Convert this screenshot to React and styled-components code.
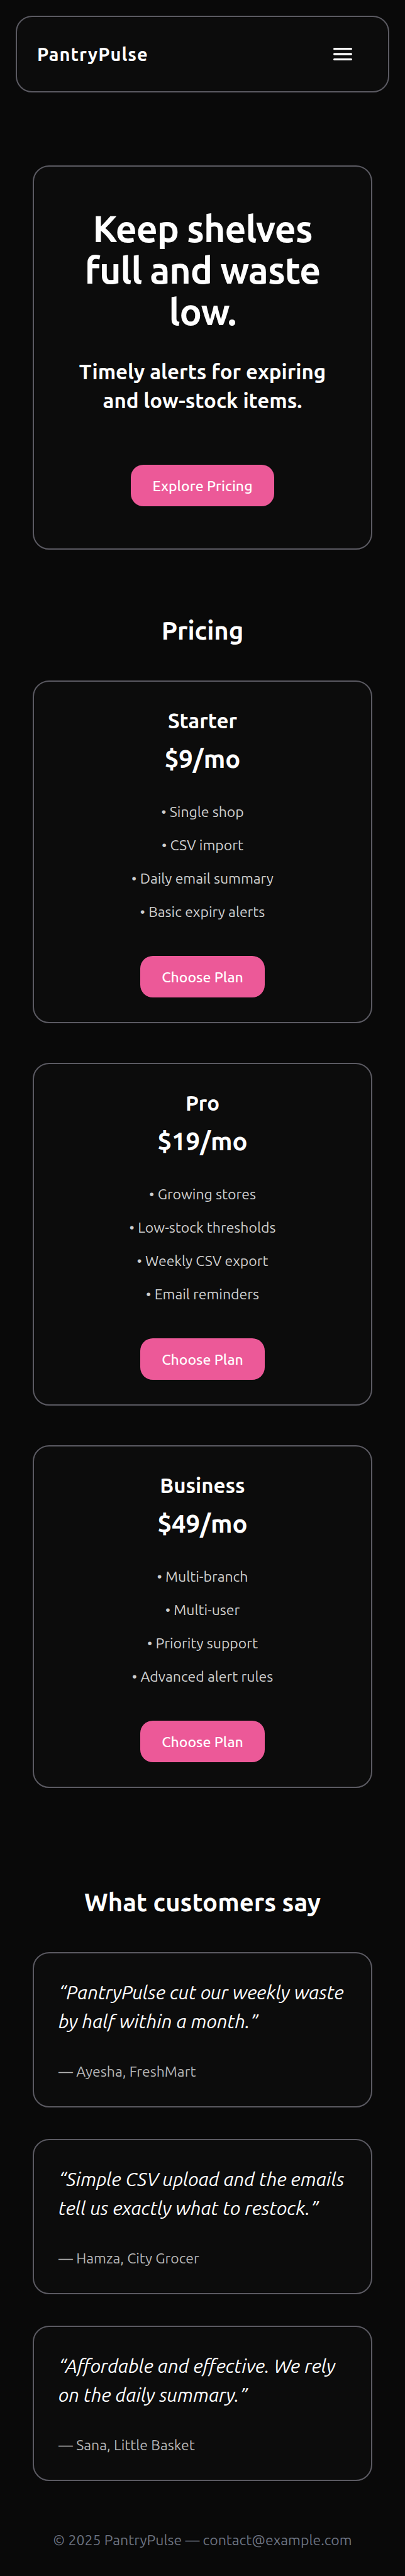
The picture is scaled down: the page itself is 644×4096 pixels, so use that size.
import React from "react";
import styled, { createGlobalStyle } from "styled-components";

const GlobalStyle = createGlobalStyle`
  *, *::before, *::after { box-sizing: border-box; }
  body {
    margin: 0;
    background: #090909;
    color: #fff;
    font-family: Ubuntu, "Noto Sans", sans-serif;
  }
  h1, h2, h3, p, ul, blockquote, figure { margin: 0; padding: 0; }
`;

const Header = styled.header`
  display: flex;
  align-items: center;
  justify-content: space-between;
  height: 122px;
  margin: 25px 25px 0;
  padding: 0 49px 0 32px;
  background: #0c0c0c;
  border: 2px solid #5b5a62;
  border-radius: 26px;
`;

const Logo = styled.a`
  color: #fff;
  font-size: 29px;
  font-weight: 700;
  line-height: 36px;
  letter-spacing: 1px;
  text-decoration: none;
`;

const MenuButton = styled.button`
  display: flex;
  padding: 8px;
  background: none;
  border: 0;
  color: #fff;
  cursor: pointer;
`;

const Main = styled.main`
  padding: 116px 52px 0;
`;

const Card = styled.div`
  background: #0c0c0c;
  border: 2px solid #5b5a62;
  border-radius: 26px;
`;

const Hero = styled(Card).attrs({ as: "section" })`
  display: flex;
  flex-direction: column;
  align-items: center;
  padding: 65px 64px 67px;
  text-align: center;
`;

const HeroTitle = styled.h1`
  font-size: 59px;
  font-weight: 700;
  line-height: 66px;
  letter-spacing: -1px;
`;

const HeroText = styled.p`
  margin-top: 40px;
  margin-bottom: 79px;
  font-size: 33px;
  font-weight: 700;
  line-height: 46px;
`;

const PinkButton = styled.button`
  height: 66px;
  padding: 0 34px;
  background: #ec5998;
  border: 0;
  border-radius: 20px;
  color: #fff;
  font-family: inherit;
  font-size: 23px;
  font-weight: 500;
  cursor: pointer;
`;

const Section = styled.section`
  padding-top: ${(p) => p.$space}px;
`;

const SectionTitle = styled.h2`
  margin-bottom: 56px;
  font-size: 40px;
  font-weight: 700;
  line-height: 46px;
  text-align: center;
`;

const Stack = styled.div`
  display: flex;
  flex-direction: column;
  gap: ${(p) => p.$gap}px;
`;

const Plan = styled(Card).attrs({ as: "article" })`
  display: flex;
  flex-direction: column;
  align-items: center;
  padding: 42px 39px 39px;
  text-align: center;
`;

const PlanName = styled.h3`
  font-size: 33px;
  font-weight: 700;
  line-height: 40px;
`;

const Price = styled.p`
  margin-top: 18px;
  font-size: 40px;
  font-weight: 700;
  line-height: 46px;
`;

const Features = styled.ul`
  display: flex;
  flex-direction: column;
  gap: 17px;
  margin: 43px 0 52px;
  list-style: none;
  color: #cfcfcf;
  font-size: 23px;
  line-height: 36px;
`;

const Feature = styled.li`
  &::before { content: "• "; }
`;

const Testimonial = styled(Card).attrs({ as: "figure" })`
  && { padding: 39px 39px 37px; }
`;

const Quote = styled.blockquote`
  font-size: 30px;
  font-style: italic;
  line-height: 46px;
`;

const Author = styled.figcaption`
  margin-top: 39px;
  color: #b5b5b5;
  font-size: 23px;
  line-height: 36px;
`;

const Footer = styled.footer`
  padding: 76px 25px 39px;
  color: #6b7280;
  font-size: 23px;
  line-height: 36px;
  text-align: center;
`;

const plans = [
  { name: "Starter", price: "$9/mo", features: ["Single shop", "CSV import", "Daily email summary", "Basic expiry alerts"] },
  { name: "Pro", price: "$19/mo", features: ["Growing stores", "Low-stock thresholds", "Weekly CSV export", "Email reminders"] },
  { name: "Business", price: "$49/mo", features: ["Multi-branch", "Multi-user", "Priority support", "Advanced alert rules"] },
];

const testimonials = [
  { quote: "“PantryPulse cut our weekly waste by half within a month.”", author: "Ayesha, FreshMart" },
  { quote: "“Simple CSV upload and the emails tell us exactly what to restock.”", author: "Hamza, City Grocer" },
  { quote: "“Affordable and effective. We rely on the daily summary.”", author: "Sana, Little Basket" },
];

function MenuIcon() {
  return (
    <svg width="30" height="20" viewBox="0 0 54 36" fill="currentColor" aria-hidden="true">
      <rect x="0" y="0" width="54" height="6" rx="3" />
      <rect x="0" y="15" width="54" height="6" rx="3" />
      <rect x="0" y="30" width="54" height="6" rx="3" />
    </svg>
  );
}

export default function App() {
  return (
    <>
      <GlobalStyle />
      <Header>
        <Logo href="#top">PantryPulse</Logo>
        <MenuButton type="button" aria-label="Menu">
          <MenuIcon />
        </MenuButton>
      </Header>
      <Main id="top">
        <Hero>
          <HeroTitle>Keep shelves full and waste low.</HeroTitle>
          <HeroText>Timely alerts for expiring and low-stock items.</HeroText>
          <PinkButton type="button">Explore Pricing</PinkButton>
        </Hero>
        <Section $space={106}>
          <SectionTitle>Pricing</SectionTitle>
          <Stack $gap={63}>
            {plans.map((plan) => (
              <Plan key={plan.name}>
                <PlanName>{plan.name}</PlanName>
                <Price>{plan.price}</Price>
                <Features>
                  {plan.features.map((feature) => (
                    <Feature key={feature}>{feature}</Feature>
                  ))}
                </Features>
                <PinkButton type="button">Choose Plan</PinkButton>
              </Plan>
            ))}
          </Stack>
        </Section>
        <Section $space={159}>
          <SectionTitle>What customers say</SectionTitle>
          <Stack $gap={50}>
            {testimonials.map((item) => (
              <Testimonial key={item.author}>
                <Quote>{item.quote}</Quote>
                <Author>— {item.author}</Author>
              </Testimonial>
            ))}
          </Stack>
        </Section>
      </Main>
      <Footer>© 2025 PantryPulse — contact@example.com</Footer>
    </>
  );
}
